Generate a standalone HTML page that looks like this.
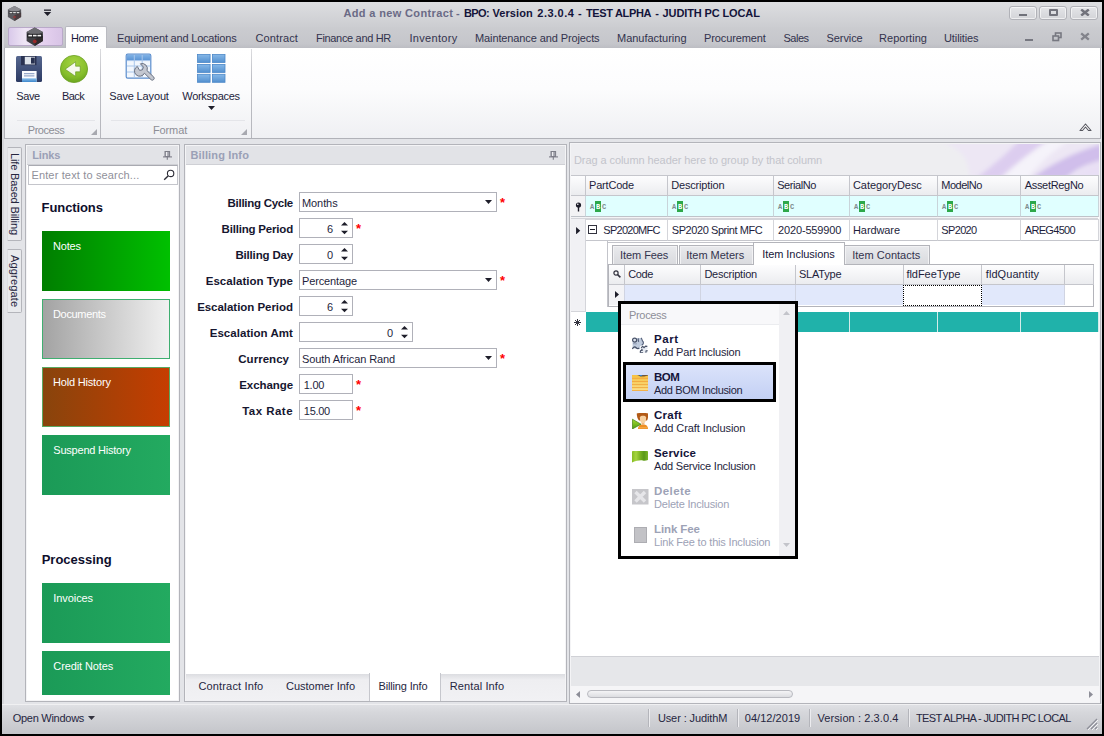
<!DOCTYPE html>
<html><head><meta charset="utf-8"><title>Add a new Contract</title>
<style>
*{box-sizing:border-box;margin:0;padding:0}
html,body{width:1104px;height:736px;overflow:hidden;background:#000}
body{font-family:"Liberation Sans",sans-serif;font-size:11px;color:#1e1e3c;position:relative}
div,span,svg{position:absolute}
.t{white-space:nowrap;line-height:14px;height:14px}
.b{font-weight:bold}
#bg{left:2px;top:2px;width:1100px;height:732px;background:#e3e4e8}
#title{left:2px;top:2px;width:1100px;height:25px;background:linear-gradient(#dddee1,#cccdd1)}
#tabs{left:2px;top:27px;width:1100px;height:21px;background:linear-gradient(#cbccd0 0%,#c5c6cb 80%,#bcbdc3 100%)}
#ribbon{left:4px;top:48px;width:1096.5px;height:91px;background:linear-gradient(#ffffff 0%,#fcfcfd 45%,#eff0f3 100%);border:1px solid #b1b2b8;border-top:none}
.mt{top:31px;color:#33334d;font-size:11px}
.wb{top:5.5px;height:14.5px;border:1px solid #b1b2b8;border-radius:3px;background:linear-gradient(#e4e5e8,#d3d4d8);box-shadow:inset 0 0 0 1px rgba(255,255,255,.6)}
.rl{top:89px;font-size:11px;color:#1e1e3c;text-align:center}
.gl{top:123px;color:#8d8e96;text-align:center}
.sep{width:1px;background:linear-gradient(rgba(190,191,197,.55),#bcbdc3 35%,#b6b7bd)}

.pnl{background:#fff;border:1px solid #b3b4ba;box-shadow:inset 0 0 0 1px #f4f4f6}
.ph{height:19px;background:#e2e3e7;border-bottom:1px solid #cfd0d5}
.pht{top:148px;color:#9aa0b6;font-weight:bold;font-size:11px}
.vt{left:7px;width:15px;border:1px solid #b4b5bb;border-left:1px solid #dcdde1;background:#e9eaed;border-radius:0 2px 2px 0}
.vtt{transform-origin:0 0;transform:rotate(90deg);font-size:11px;color:#26263f;letter-spacing:-0.1px}
.tile{left:42px;width:128px;height:60px}
.tt{left:53px;color:#fff;font-size:11px;letter-spacing:-0.15px}
.h{font-weight:bold;font-size:13px;left:42px;color:#0e0e2c;letter-spacing:-0.1px}

.lb{font-weight:bold;font-size:11.5px;color:#16162f;text-align:right;width:120px;left:173px;letter-spacing:-0.05px}
.in{background:#fff;border:1px solid #b0b1b9;height:20px;left:299px}
.iv{font-size:11px;color:#1e1e3c;letter-spacing:-0.1px}
.st{color:#f00;font-weight:bold;font-size:13px;line-height:14px;height:14px}
.bt{top:679px;font-size:11px;color:#26263f;letter-spacing:-0.12px}

.gh{top:176px;height:20px;background:linear-gradient(#fdfdfe,#ebecef);border-right:1px solid #c5c6cc;border-bottom:1px solid #c5c6cc}
.ght{top:178px;font-size:11px;color:#1e1e3c;letter-spacing:-0.15px}
.fc{top:196px;height:21px;background:#e0ffff;border-right:1px solid #c9d4da;border-bottom:1px solid #bfc3c9}
.dc{top:219px;height:22px;background:#fff;border-right:1px solid #d4d5da;border-bottom:1px solid #c5c6cc;border-top:1px solid #d4d5da}
.dt{top:223px;font-size:11px;color:#1e1e3c;letter-spacing:-0.2px}
.abc{top:201px;width:16px;height:11px;font-family:"Liberation Mono",monospace;font-size:7px;font-weight:bold;line-height:12.4px;color:#7d8a8c}
.abc b{position:absolute;left:5px;top:0;width:6px;height:11px;background:#2da84a;color:#fff;text-align:center}
.abc i{position:absolute;font-style:normal;top:0}
.itab{top:245px;height:20px;border:1px solid #b3b4ba;border-bottom:none;background:linear-gradient(#e9eaed,#d9dade);box-shadow:inset 0 0 0 1px #f2f2f4}
.itt{top:248px;font-size:11px;color:#33334d;letter-spacing:-0.15px}
.sh{top:265px;height:20px;background:linear-gradient(#fdfdfe,#ebecef);border-right:1px solid #c5c6cc;border-bottom:1px solid #c5c6cc}
.sht{top:267px;font-size:11px;color:#1e1e3c;letter-spacing:-0.15px}
.sc{top:285px;height:20px;background:#e1e8fb;border-right:1px solid #d0d4e2}
.nr{top:312px;height:20px;background:#20b2aa;border-right:1px solid #d5ecea}

.pb{left:654px;font-weight:bold;font-size:11.5px;color:#14143a;letter-spacing:0.1px}
.ps{left:654px;font-size:11px;color:#1e1e3c;letter-spacing:-0.2px}
.dis{color:#9da2b6}
.sbt{top:711px;font-size:11px;color:#26263f;letter-spacing:-0.15px}
.sbs{top:709px;width:1px;height:18px;background:#b4b5bb;box-shadow:1px 0 0 #ececef}
</style></head><body>
<div id="bg"></div>
<!-- ===== title bar ===== -->
<div id="title"></div>
<div id="tabs"></div>
<div style="left:2px;top:2px;width:2px;height:732px;background:#d6d7db"></div>
<svg style="left:6.5px;top:4.5px" width="15" height="17" viewBox="0 0 17 18"><polygon points="8.5,0.5 16,4.5 16,13 8.5,17.5 1,13 1,4.5" fill="#5a5a5f"/><polygon points="8.5,0.5 16,4.5 8.5,8.5 1,4.5" fill="#8d8d92"/><polygon points="8.5,17.5 8.5,11 16,8 16,13" fill="#4a3d40"/><rect x="2" y="6.5" width="13" height="3" fill="#3a3a3e"/><rect x="3" y="7.3" width="3" height="1.4" fill="#dcdcdc"/><rect x="7" y="7.3" width="3" height="1.4" fill="#dcdcdc"/><rect x="11" y="7.3" width="3" height="1.4" fill="#dcdcdc"/><circle cx="8.5" cy="13" r="1.5" fill="#8a3a3a"/></svg>
<svg style="left:43px;top:9px" width="9" height="8" viewBox="0 0 9 8"><rect x="1" y="0.5" width="7" height="1.3" fill="#1e1e2a"/><polygon points="0.8,3 8.2,3 4.5,7" fill="#1e1e2a"/></svg>
<div id="ttl" style="left:0;top:6.4px;width:1104px;height:14px;font-weight:bold;font-size:11px;color:#14143a"><span class="t tsg" style="left:343.4px;top:0;color:#6a6a86;letter-spacing:0.361px">Add a new Contract</span> <span class="t tsg" style="left:456px;top:0;color:#6a6a86">-</span> <span class="t tsg" style="left:464.1px;top:0;letter-spacing:-0.675px">BPO:</span> <span class="t tsg" style="left:492.4px;top:0;letter-spacing:0.093px">Version</span> <span class="t tsg" style="left:537.3px;top:0;letter-spacing:0.480px">2.3.0.4</span> <span class="t tsg" style="left:577.9px;top:0">-</span> <span class="t tsg" style="left:585.9px;top:0;letter-spacing:-0.346px">TEST ALPHA</span> <span class="t tsg" style="left:655.2px;top:0">-</span> <span class="t tsg" style="left:662.6px;top:0;letter-spacing:-0.120px">JUDITH PC LOCAL</span> </div>
<div class="wb" style="left:1009px;width:28px"></div>
<div class="wb" style="left:1039px;width:28px"></div>
<div class="wb" style="left:1070px;width:28px"></div>
<div style="left:1019px;top:14px;width:8px;height:2px;background:#70717a"></div>
<div style="left:1049px;top:9.3px;width:9.4px;height:6.6px;border:2.1px solid #72737c;border-radius:1px"></div>
<svg style="left:1079.5px;top:9px" width="10" height="7" viewBox="0 0 10 7"><path d="M1.2 0.5 L8.8 6.5 M8.8 0.5 L1.2 6.5" stroke="#72737c" stroke-width="2.5"/></svg>
<!-- ===== menu tabs ===== -->
<div style="left:8px;top:27px;width:55px;height:19px;border:1px solid #b9a9c9;border-radius:2px;background:linear-gradient(90deg,#d9c9ea,#efe6f5 30%,#e3cfee 70%,#d8c4e6)"></div>
<svg style="left:25px;top:26.5px" width="19.5" height="19.5" viewBox="0 0 17 18"><polygon points="8.5,0.5 16,4.5 16,13 8.5,17.5 1,13 1,4.5" fill="#3f3f43"/><polygon points="8.5,0.5 16,4.5 8.5,8.5 1,4.5" fill="#6c6c71"/><polygon points="8.5,17.5 8.5,11 16,8 16,13" fill="#2f2a2c"/><rect x="1.5" y="6.3" width="14" height="3.4" fill="#1d1d20"/><rect x="2.6" y="7.2" width="3.4" height="1.5" fill="#f2f2f2"/><rect x="6.8" y="7.2" width="3.4" height="1.5" fill="#f2f2f2"/><rect x="11" y="7.2" width="3.4" height="1.5" fill="#f2f2f2"/><circle cx="8.5" cy="13.2" r="1.7" fill="#9a2a2a"/></svg>
<div style="left:65px;top:26px;width:42px;height:23px;background:linear-gradient(#fdfdfe,#fff);border:1px solid #b9bac0;border-bottom:none;border-radius:2px 2px 0 0"></div>
<div class="t mt" style="left:71px;color:#16163a;letter-spacing:-0.536px">Home</div>
<div class="t mt" style="left:117px;letter-spacing:-0.202px">Equipment and Locations</div>
<div class="t mt" style="left:255.5px;letter-spacing:0.115px">Contract</div>
<div class="t mt" style="left:316px;letter-spacing:-0.321px">Finance and HR</div>
<div class="t mt" style="left:409.5px;letter-spacing:0.306px">Inventory</div>
<div class="t mt" style="left:475px;letter-spacing:-0.112px">Maintenance and Projects</div>
<div class="t mt" style="left:617px;letter-spacing:-0.017px">Manufacturing</div>
<div class="t mt" style="left:704px;letter-spacing:-0.108px">Procurement</div>
<div class="t mt" style="left:783.5px;letter-spacing:-0.506px">Sales</div>
<div class="t mt" style="left:826.5px;letter-spacing:-0.08px">Service</div>
<div class="t mt" style="left:879px;letter-spacing:0.033px">Reporting</div>
<div class="t mt" style="left:944px;letter-spacing:-0.106px">Utilities</div>
<div style="left:1025px;top:39px;width:8px;height:2px;background:#777881"></div>
<svg style="left:1052px;top:32px" width="10" height="10" viewBox="0 0 10 10"><rect x="3.5" y="1" width="5.5" height="4.5" fill="none" stroke="#777881" stroke-width="1.6"/><rect x="1" y="4" width="5.5" height="4.5" fill="#c4c5ca" stroke="#777881" stroke-width="1.6"/></svg>
<svg style="left:1080px;top:32px" width="10" height="9" viewBox="0 0 10 9"><path d="M1.2 1.4 L8.8 7.6 M8.8 1.4 L1.2 7.6" stroke="#83848c" stroke-width="2.4"/></svg>
<!-- ===== ribbon ===== -->
<div id="ribbon"></div>
<div class="sep" style="left:100px;top:49px;height:89px"></div>
<div class="sep" style="left:251px;top:49px;height:89px"></div>
<div style="left:17px;top:120px;width:78px;height:1px;background:#e4e5e9"></div>
<div style="left:111px;top:120px;width:134px;height:1px;background:#e4e5e9"></div>
<div class="t rl" style="left:8px;width:40px;letter-spacing:-0.365px">Save</div>
<div class="t rl" style="left:53px;width:40px;letter-spacing:-0.562px">Back</div>
<div class="t rl" style="left:104px;width:70px;letter-spacing:-0.148px">Save Layout</div>
<div class="t rl" style="left:176px;width:70px;letter-spacing:-0.277px">Workspaces</div>
<svg style="left:208px;top:106px" width="7" height="4" viewBox="0 0 7 4"><polygon points="0,0 7,0 3.5,4" fill="#1e1e2a"/></svg>
<div class="t gl" style="left:16px;width:60px;letter-spacing:-0.485px">Process</div>
<div class="t gl" style="left:140px;width:60px;letter-spacing:-0.099px">Format</div>
<svg style="left:91px;top:129px" width="6" height="6" viewBox="0 0 6 6"><polygon points="6,0 6,6 0,6" fill="#a8a9b0"/></svg>
<svg style="left:241px;top:129px" width="6" height="6" viewBox="0 0 6 6"><polygon points="6,0 6,6 0,6" fill="#a8a9b0"/></svg>
<svg style="left:1079px;top:122px" width="13" height="10" viewBox="0 0 13 10"><path d="M1 8.5 L6.5 2 L12 8.5 L9.5 8.5 L6.5 5 L3.5 8.5 Z" fill="#fff" stroke="#55565e" stroke-width="1.1" stroke-linejoin="round"/></svg>
<svg style="left:16px;top:56px" width="26" height="26" viewBox="0 0 26 26"><defs><linearGradient id="fl" x1="0" y1="0" x2="0" y2="1"><stop offset="0" stop-color="#56678f"/><stop offset="1" stop-color="#2c3a63"/></linearGradient><linearGradient id="fb" x1="0" y1="0" x2="0" y2="1"><stop offset="0" stop-color="#8cc0ea"/><stop offset="1" stop-color="#3d86cc"/></linearGradient></defs><rect x="0" y="0" width="26" height="26" rx="1.5" fill="url(#fl)"/><rect x="5" y="0" width="15.5" height="9.2" fill="#2a3252"/><rect x="8.8" y="0.8" width="10.2" height="7.6" fill="#dfe4ec"/><rect x="15" y="1.6" width="3.8" height="6" fill="#27304e"/><rect x="6" y="15" width="14.6" height="11" fill="#fbfcfe"/><rect x="8" y="17.2" width="10.4" height="1" fill="#7f95bd"/><rect x="8" y="19.4" width="10.4" height="1" fill="#7f95bd"/><rect x="6" y="22.3" width="14.6" height="3.7" fill="url(#fb)"/></svg>
<svg style="left:60px;top:55px" width="28" height="28" viewBox="0 0 28 28"><defs><radialGradient id="gb" cx="0.5" cy="0.3" r="0.8"><stop offset="0" stop-color="#a6d544"/><stop offset="0.6" stop-color="#86be2c"/><stop offset="1" stop-color="#5f9a1a"/></radialGradient></defs><circle cx="14" cy="14" r="13.6" fill="url(#gb)" stroke="#6c9f23" stroke-width="0.8"/><path d="M5.2 14.2 L15.6 6.8 L15.6 11.2 L20.2 11.2 L20.2 16.8 L15.6 16.8 L15.6 21.4 Z" fill="#f6f9ef" stroke="#5e8f1c" stroke-width="0.6"/></svg>
<svg style="left:125px;top:53px" width="30" height="30" viewBox="0 0 30 30"><defs><linearGradient id="th" x1="0" y1="0" x2="0" y2="1"><stop offset="0" stop-color="#7fb2e6"/><stop offset="1" stop-color="#5a93d4"/></linearGradient></defs><rect x="1.2" y="1.2" width="24.6" height="24" rx="1.5" fill="#f2f7fd" stroke="#5b8dcd" stroke-width="1.2"/><rect x="1.8" y="1.8" width="23.4" height="5.6" fill="url(#th)"/><path d="M9.3 2 V25 M17.2 2 V25 M2 13 H25 M2 19 H25 M2 7.6 H25" stroke="#a9c6ea" stroke-width="1" fill="none"/><path d="M12.5 11.2 A5.2 5.2 0 1 0 19.6 18 L26.4 24.6 A1.9 1.9 0 0 0 29 21.9 L22.2 15.4 A5.2 5.2 0 0 0 15.6 8.6 L18.6 11.8 L17.6 14.6 L14.8 15.2 Z" transform="translate(-0.2,2.2)" fill="#c3c7d0" stroke="#6a7181" stroke-width="1" stroke-linejoin="round"/></svg>
<svg style="left:197px;top:54px" width="29" height="29" viewBox="0 0 29 29"><defs><linearGradient id="wg" x1="0" y1="0" x2="0" y2="1"><stop offset="0" stop-color="#86b8e8"/><stop offset="1" stop-color="#5390cf"/></linearGradient></defs><g fill="url(#wg)" stroke="#4c88c8" stroke-width="0.8"><rect x="0.5" y="0.5" width="12.6" height="8"/><rect x="15.4" y="0.5" width="12.6" height="8"/><rect x="0.5" y="10.4" width="12.6" height="8"/><rect x="15.4" y="10.4" width="12.6" height="8"/><rect x="0.5" y="20.3" width="12.6" height="8"/><rect x="15.4" y="20.3" width="12.6" height="8"/></g></svg>
<!-- ICONS-RIBBON -->
<div class="vt" style="top:147px;height:94px"></div>
<div class="vt" style="top:249px;height:64px"></div>
<div class="t vtt" style="left:21.5px;top:153px;letter-spacing:-0.14px">Life Based Billing</div>
<div class="t vtt" style="left:21.5px;top:255px;letter-spacing:0.18px">Aggregate</div>
<div class="pnl" style="left:25px;top:144px;width:155px;height:558px"></div>
<div class="ph" style="left:27px;top:146px;width:151px"></div>
<div class="t pht" style="left:32.2px;letter-spacing:-0.163px">Links</div>
<svg style="left:163px;top:150.7px" width="9" height="9" viewBox="0 0 9 9"><rect x="2" y="0.5" width="4.6" height="5" fill="#a0a1aa" stroke="#7d7e88" stroke-width="1"/><rect x="3" y="1" width="1.2" height="4" fill="#ededf0"/><path d="M0 5.9 H9" stroke="#7d7e88" stroke-width="1.1"/><path d="M4.3 6 V8.8" stroke="#7d7e88" stroke-width="1.1"/></svg>
<div style="left:28px;top:165px;width:150px;height:20px;background:#fff;border:1px solid #c4c5cb;border-top-color:#a9aab1"></div>
<div class="t" style="left:31.4px;top:168px;color:#8f909a;font-size:11px;letter-spacing:0.153px">Enter text to search...</div>
<svg style="left:163px;top:169px" width="12" height="12" viewBox="0 0 12 12"><circle cx="7.6" cy="4.4" r="3.2" fill="none" stroke="#2c2c36" stroke-width="1.1"/><path d="M5.3 6.8 L1.2 10.8" stroke="#2c2c36" stroke-width="1.4"/></svg>
<div class="t h" style="left:41.6px;top:201px;letter-spacing:-0.095px">Functions</div>
<div class="tile" style="top:231px;background:linear-gradient(90deg,#007e00,#00c000)"></div>
<div class="t tt" style="left:53px;top:239px;letter-spacing:-0.167px">Notes</div>
<div class="tile" style="top:299px;background:linear-gradient(90deg,#a3a3a3,#f1f1f1);border:1px solid #3fae70"></div>
<div class="t tt" style="left:53px;top:307px;letter-spacing:-0.334px">Documents</div>
<div class="tile" style="top:367px;background:linear-gradient(90deg,#88440c,#c63d00);border:1px solid #5aa860"></div>
<div class="t tt" style="left:53px;top:375px;letter-spacing:-0.183px">Hold History</div>
<div class="tile" style="top:435px;background:linear-gradient(90deg,#1b9a57,#23aa60)"></div>
<div class="t tt" style="left:53.3px;top:443px;letter-spacing:-0.222px">Suspend History</div>
<div class="t h" style="left:41.7px;top:553px;letter-spacing:-0.010px">Processing</div>
<div class="tile" style="top:583px;background:linear-gradient(90deg,#1b9a57,#23aa60)"></div>
<div class="t tt" style="left:53.3px;top:591px;letter-spacing:-0.075px">Invoices</div>
<div class="tile" style="top:651px;height:44px;background:linear-gradient(90deg,#1b9a57,#23aa60)"></div>
<div class="t tt" style="left:53.3px;top:659px;letter-spacing:-0.099px">Credit Notes</div>
<!-- LEFT -->
<div class="pnl" style="left:184px;top:144px;width:383px;height:558px"></div>
<div class="ph" style="left:186px;top:146px;width:379px"></div>
<div class="t pht" style="left:190.4px;letter-spacing:0.154px">Billing Info</div>
<svg style="left:549.3px;top:150.7px" width="9" height="9" viewBox="0 0 9 9"><rect x="2" y="0.5" width="4.6" height="5" fill="#a0a1aa" stroke="#7d7e88" stroke-width="1"/><rect x="3" y="1" width="1.2" height="4" fill="#ededf0"/><path d="M0 5.9 H9" stroke="#7d7e88" stroke-width="1.1"/><path d="M4.3 6 V8.8" stroke="#7d7e88" stroke-width="1.1"/></svg>
<div class="t lb" style="top:195.7px;left:173px;letter-spacing:-0.275px">Billing Cycle</div>
<div class="in" style="top:192px;width:198px"></div><div class="t iv" style="left:302px;top:195.5px;letter-spacing:-0.087px">Months</div><svg style="left:485px;top:200px" width="7" height="4" viewBox="0 0 7 4"><polygon points="0,0 7,0 3.5,4" fill="#1e1e2a"/></svg><div class="t st" style="left:500px;top:196px">*</div>
<div class="t lb" style="top:221.7px;left:173px;letter-spacing:-0.194px">Billing Period</div>
<div class="in" style="top:218px;width:54px"></div><div class="t iv" style="left:313px;width:20px;text-align:right;top:221.5px">6</div><svg style="left:341px;top:222px" width="7" height="13" viewBox="0 0 7 13"><polygon points="0,3.5 7,3.5 3.5,0" fill="#1e1e2a"/><polygon points="0,8.7 7,8.7 3.5,12.2" fill="#1e1e2a"/></svg>
<div class="t st" style="left:356px;top:222px">*</div>
<div class="t lb" style="top:247.7px;left:173px;letter-spacing:-0.165px">Billing Day</div>
<div class="in" style="top:244px;width:54px"></div><div class="t iv" style="left:313px;width:20px;text-align:right;top:247.5px">0</div><svg style="left:341px;top:248px" width="7" height="13" viewBox="0 0 7 13"><polygon points="0,3.5 7,3.5 3.5,0" fill="#1e1e2a"/><polygon points="0,8.7 7,8.7 3.5,12.2" fill="#1e1e2a"/></svg>
<div class="t lb" style="top:273.7px;left:173px;letter-spacing:0.040px">Escalation Type</div>
<div class="in" style="top:270px;width:198px"></div><div class="t iv" style="left:302px;top:273.5px;letter-spacing:-0.133px">Percentage</div><svg style="left:485px;top:278px" width="7" height="4" viewBox="0 0 7 4"><polygon points="0,0 7,0 3.5,4" fill="#1e1e2a"/></svg><div class="t st" style="left:500px;top:274px">*</div>
<div class="t lb" style="top:299.7px;left:173px;letter-spacing:-0.037px">Escalation Period</div>
<div class="in" style="top:296px;width:54px"></div><div class="t iv" style="left:313px;width:20px;text-align:right;top:299.5px">6</div><svg style="left:341px;top:300px" width="7" height="13" viewBox="0 0 7 13"><polygon points="0,3.5 7,3.5 3.5,0" fill="#1e1e2a"/><polygon points="0,8.7 7,8.7 3.5,12.2" fill="#1e1e2a"/></svg>
<div class="t lb" style="top:325.7px;left:173px;letter-spacing:0.048px">Escalation Amt</div>
<div class="in" style="top:322px;width:114px"></div><div class="t iv" style="left:373px;width:20px;text-align:right;top:325.5px">0</div><svg style="left:401px;top:326px" width="7" height="13" viewBox="0 0 7 13"><polygon points="0,3.5 7,3.5 3.5,0" fill="#1e1e2a"/><polygon points="0,8.7 7,8.7 3.5,12.2" fill="#1e1e2a"/></svg>
<div class="t lb" style="top:351.7px;left:169px;letter-spacing:0.027px">Currency</div>
<div class="in" style="top:348px;width:198px"></div><div class="t iv" style="left:302px;top:351.5px;letter-spacing:-0.091px">South African Rand</div><svg style="left:485px;top:356px" width="7" height="4" viewBox="0 0 7 4"><polygon points="0,0 7,0 3.5,4" fill="#1e1e2a"/></svg><div class="t st" style="left:500px;top:352px">*</div>
<div class="t lb" style="top:377.7px;left:173px;letter-spacing:-0.070px">Exchange</div>
<div class="in" style="top:374px;width:54px"></div><div class="t iv" style="left:303.8px;top:377.5px;letter-spacing:-0.292px">1.00</div><div class="t st" style="left:356px;top:378px">*</div>
<div class="t lb" style="top:403.7px;left:173px;letter-spacing:0.468px">Tax Rate</div>
<div class="in" style="top:400px;width:54px"></div><div class="t iv" style="left:303.8px;top:403.5px;letter-spacing:-0.274px">15.00</div><div class="t st" style="left:356px;top:404px">*</div>
<div style="left:186px;top:674px;width:379px;height:27px;background:linear-gradient(#dcdde1 0%,#eeeef1 22%,#f1f1f4 100%)"></div>
<div style="left:369px;top:673px;width:72px;height:28px;background:#fff;border:1px solid #c6c7cd;border-top:none;border-bottom:none"></div>
<div class="t bt" style="left:198.5px;letter-spacing:0.145px">Contract Info</div>
<div class="t bt" style="left:286px;letter-spacing:-0.007px">Customer Info</div>
<div class="t bt" style="left:378.5px;letter-spacing:-0.154px">Billing Info</div>
<div class="t bt" style="left:449.8px;letter-spacing:0.104px">Rental Info</div>
<!-- MID -->
<div class="pnl" style="left:569px;top:142px;width:531.5px;height:562px"></div>
<div style="left:571px;top:655.6px;width:527.5px;height:30.4px;background:#e6e7ea;border-top:1px solid #d0d1d6"></div>
<div style="left:571px;top:144px;width:527.5px;height:32px;background:#eeeef1;border-bottom:1px solid #c5c6cc;overflow:hidden">
<svg style="left:327px;top:0" width="201" height="31" viewBox="0 0 201 31"><defs><filter id="bl" x="-10%" y="-30%" width="120%" height="160%"><feGaussianBlur stdDeviation="2.2"/></filter></defs><g filter="url(#bl)"><path d="M40 -3 C70 6 70 20 72 34 L204 34 L204 -3 Z" fill="#ece4f5" opacity=".75"/><path d="M78 34 C95 22 110 8 122 -4 L150 -4 C132 8 115 22 102 34 Z" fill="#d8c7ee" opacity=".8"/><path d="M104 34 C118 20 136 6 152 -4 L172 -4 C156 6 140 20 130 34 Z" fill="#f6f3fa" opacity=".95"/><path d="M134 34 C150 22 176 8 204 0 L204 16 C188 20 176 26 168 34 Z" fill="#cdb9ea" opacity=".9"/><path d="M172 34 C182 26 194 20 204 17 L204 34 Z" fill="#e9dff5" opacity=".9"/></g></svg></div>
<div class="t" style="left:574px;top:153px;font-size:11px;color:#c3c4cb;letter-spacing:-0.077px">Drag a column header here to group by that column</div>
<div class="gh" style="left:571px;width:15px"></div>
<div class="fc" style="left:571px;width:15px;background:#f3f3f5"></div>
<svg style="left:575px;top:202px" width="7" height="10" viewBox="0 0 7 10"><circle cx="3.5" cy="3" r="2.6" fill="#1e1e2a"/><circle cx="2.8" cy="2.3" r="0.8" fill="#fff"/><rect x="2.8" y="5" width="1.4" height="4.5" fill="#1e1e2a"/></svg>
<div style="left:571px;top:217px;width:15px;height:95px;background:#f1f1f4;border-right:1px solid #d4d5da"></div>
<div style="left:571px;top:217px;width:527px;height:2px;background:#f4f4f6;border-bottom:1px solid #d4d5da"></div>
<svg style="left:576.3px;top:227px" width="4.3" height="7.4" viewBox="0 0 4 7"><polygon points="0,0 4,3.5 0,7" fill="#1e1e2a"/></svg>
<div class="gh" style="left:586px;width:82px"></div><div class="t ght" style="left:589px;letter-spacing:-0.198px">PartCode</div>
<div class="fc" style="left:586px;width:82px"></div><div class="abc" style="left:590px"><i style="left:0">A</i><b>B</b><i style="left:12px">C</i></div>
<div class="dc" style="left:586px;width:82px"></div><div class="t dt" style="left:603.3px;letter-spacing:-0.728px">SP2020MFC</div>
<div class="gh" style="left:668px;width:106px"></div><div class="t ght" style="left:671.2px;letter-spacing:-0.165px">Description</div>
<div class="fc" style="left:668px;width:106px"></div><div class="abc" style="left:672px"><i style="left:0">A</i><b>B</b><i style="left:12px">C</i></div>
<div class="dc" style="left:668px;width:106px"></div><div class="t dt" style="left:671.8px;letter-spacing:-0.432px">SP2020 Sprint MFC</div>
<div class="gh" style="left:774px;width:76px"></div><div class="t ght" style="left:777.2px;letter-spacing:-0.438px">SerialNo</div>
<div class="fc" style="left:774px;width:76px"></div><div class="abc" style="left:778px"><i style="left:0">A</i><b>B</b><i style="left:12px">C</i></div>
<div class="dc" style="left:774px;width:76px"></div><div class="t dt" style="left:778px;letter-spacing:-0.147px">2020-559900</div>
<div class="gh" style="left:850px;width:88px"></div><div class="t ght" style="left:853px;letter-spacing:-0.079px">CategoryDesc</div>
<div class="fc" style="left:850px;width:88px"></div><div class="abc" style="left:854px"><i style="left:0">A</i><b>B</b><i style="left:12px">C</i></div>
<div class="dc" style="left:850px;width:88px"></div><div class="t dt" style="left:853px;letter-spacing:-0.092px">Hardware</div>
<div class="gh" style="left:938px;width:83px"></div><div class="t ght" style="left:941.3px;letter-spacing:-0.497px">ModelNo</div>
<div class="fc" style="left:938px;width:83px"></div><div class="abc" style="left:942px"><i style="left:0">A</i><b>B</b><i style="left:12px">C</i></div>
<div class="dc" style="left:938px;width:83px"></div><div class="t dt" style="left:941.3px;letter-spacing:-0.647px">SP2020</div>
<div class="gh" style="left:1021px;width:78px"></div><div class="t ght" style="left:1024.7px;letter-spacing:-0.312px">AssetRegNo</div>
<div class="fc" style="left:1021px;width:78px"></div><div class="abc" style="left:1025px"><i style="left:0">A</i><b>B</b><i style="left:12px">C</i></div>
<div class="dc" style="left:1021px;width:78px"></div><div class="t dt" style="left:1024.8px;letter-spacing:-0.688px">AREG4500</div>
<div style="left:588px;top:225px;width:9px;height:9px;border:1px solid #33333f;background:#fff"></div><div style="left:590px;top:229px;width:5px;height:1px;background:#1e1e2a"></div>
<div style="left:607px;top:241px;width:488px;height:66px;border-left:1px solid #c3c4ca;background:#fff"></div><div style="left:607px;top:241.5px;width:147px;height:1px;background:#c3c4ca"></div><div style="left:571px;top:311px;width:15px;height:1px;background:#d4d5da"></div>
<div class="itab" style="left:612px;width:66px"></div><div class="t itt" style="left:620.1px;letter-spacing:-0.083px">Item Fees</div>
<div class="itab" style="left:679px;width:75px"></div><div class="t itt" style="left:686.2px;letter-spacing:-0.007px">Item Meters</div>
<div class="itab" style="left:844px;width:86px"></div><div class="t itt" style="left:852.2px;letter-spacing:0.027px">Item Contacts</div>
<div style="left:608px;top:264px;width:486px;height:43px;border:1px solid #b3b4ba;background:#fff"></div>
<div style="left:753px;top:242px;width:92px;height:23px;border:1px solid #b3b4ba;border-bottom:none;background:#fff"></div><div class="t itt" style="left:762.2px;top:247px;color:#16163a;letter-spacing:-0.053px">Item Inclusions</div>
<div class="sh" style="left:609px;width:16px"></div><div class="sc" style="left:609px;width:16px;background:#f3f3f6"></div>
<div class="sh" style="left:625px;width:76px"></div><div class="t sht" style="left:628.3px;letter-spacing:-0.428px">Code</div><div class="sc" style="left:625px;width:76px"></div>
<div class="sh" style="left:701px;width:95px"></div><div class="t sht" style="left:704.4px;letter-spacing:-0.222px">Description</div><div class="sc" style="left:701px;width:95px"></div>
<div class="sh" style="left:796px;width:108px"></div><div class="t sht" style="left:798.9px;letter-spacing:-0.189px">SLAType</div><div class="sc" style="left:796px;width:108px"></div>
<div class="sh" style="left:904px;width:78px"></div><div class="t sht" style="left:906.5px;letter-spacing:-0.065px">fldFeeType</div><div class="sc" style="left:904px;width:78px"></div>
<div class="sh" style="left:982px;width:83px"></div><div class="t sht" style="left:985.8px;letter-spacing:0.067px">fldQuantity</div><div class="sc" style="left:982px;width:83px"></div>
<div class="sh" style="left:1065px;width:29px"></div>
<svg style="left:613px;top:270px" width="8" height="8" viewBox="0 0 8 8"><circle cx="3" cy="3" r="2.1" fill="none" stroke="#33333f" stroke-width="1.2"/><path d="M4.6 4.6 L7.4 7.4" stroke="#33333f" stroke-width="1.5"/></svg>
<svg style="left:615px;top:291px" width="4" height="7" viewBox="0 0 4 7"><polygon points="0,0 4,3.5 0,7" fill="#1e1e2a"/></svg>
<div style="left:903px;top:285px;width:79px;height:21px;background:#fff;border:1px dotted #000"></div>
<svg style="left:574px;top:319px" width="7" height="7" viewBox="0 0 7 7"><path d="M3.5 0 V7 M0 3.5 H7 M1 1 L6 6 M6 1 L1 6" stroke="#33333f" stroke-width="1"/></svg>
<div class="nr" style="left:586px;width:82px"></div><div class="nr" style="left:668px;width:106px"></div><div class="nr" style="left:774px;width:76px"></div><div class="nr" style="left:850px;width:88px"></div><div class="nr" style="left:938px;width:83px"></div><div class="nr" style="left:1021px;width:78px"></div>
<div style="left:571px;top:686px;width:527.5px;height:16px;background:#f5f5f7"></div>
<div style="left:587px;top:690.3px;width:205.5px;height:8px;border:1px solid #b9bac0;border-radius:4px;background:linear-gradient(#f4f4f6,#dcdde1)"></div>
<svg style="left:576px;top:691px" width="4" height="7" viewBox="0 0 4 7"><polygon points="4,0 0,3.5 4,7" fill="#8d8e98"/></svg>
<svg style="left:1089px;top:691px" width="4" height="7" viewBox="0 0 4 7"><polygon points="0,0 4,3.5 0,7" fill="#8d8e98"/></svg>
<!-- GRID -->
<div style="left:618px;top:301px;width:180px;height:258px;background:#fff;border:3px solid #000"></div>
<div style="left:621px;top:304px;width:158px;height:21px;background:#f8f8fa;border-bottom:1px solid #ebecef"></div>
<div style="left:779px;top:304px;width:16px;height:252px;background:#f0f0f3"></div>
<svg style="left:783px;top:311px" width="7" height="4" viewBox="0 0 7 4"><polygon points="0,4 7,4 3.5,0" fill="#c3c4ca"/></svg>
<svg style="left:783px;top:543px" width="7" height="4" viewBox="0 0 7 4"><polygon points="0,0 7,0 3.5,4" fill="#c3c4ca"/></svg>
<div class="t" style="left:629px;top:308px;font-size:11px;color:#8d8e98;letter-spacing:-0.33px">Process</div>
<div style="left:623px;top:362px;width:153px;height:40px;background:linear-gradient(#dbe3fa,#c3d0f4);border:3px solid #000"></div>
<div class="t pb" style="left:654px;top:332px;letter-spacing:0.607px">Part</div><div class="t ps" style="left:654px;top:345px;letter-spacing:-0.153px">Add Part Inclusion</div>
<div class="t pb" style="left:654px;top:370px;letter-spacing:-0.458px">BOM</div><div class="t ps" style="left:654px;top:383px;letter-spacing:-0.349px">Add BOM Inclusion</div>
<div class="t pb" style="left:654px;top:408px;letter-spacing:0.235px">Craft</div><div class="t ps" style="left:654px;top:421px;letter-spacing:-0.083px">Add Craft Inclusion</div>
<div class="t pb" style="left:654px;top:446px;letter-spacing:0.179px">Service</div><div class="t ps" style="left:654px;top:459px;letter-spacing:-0.209px">Add Service Inclusion</div>
<div class="t pb dis" style="left:654px;top:484px;letter-spacing:0.431px">Delete</div><div class="t ps dis" style="left:654px;top:497px;letter-spacing:-0.192px">Delete Inclusion</div>
<div class="t pb dis" style="left:654px;top:522px;letter-spacing:-0.114px">Link Fee</div><div class="t ps dis" style="left:654px;top:535px;letter-spacing:-0.183px">Link Fee to this Inclusion</div>
<svg style="left:632px;top:336.5px" width="16.5" height="16.5" viewBox="0 0 17 17"><path d="M0.6 3 L4.6 1.4 L9 1 L11.6 4.4 L11.8 8 L8.4 9.6 L7.8 12.6 L4 12.2 L0.6 11.4 Z" fill="#bfcbdd"/><path d="M8.4 11.6 L11 9.2 L13 10.4 L15.8 9.2 L16.2 12 L14.6 13.4 L16.2 14.4 L16 16.2 L8.4 16.2 L9.6 13.8 Z" fill="#e9edf4"/><circle cx="2.7" cy="3.2" r="2.1" fill="#dde3ee" stroke="#485268" stroke-width="1.25"/><path d="M6.2 1.4 C7 2.6 6 4 7 5 M9.4 1 C10.6 2.4 10.2 3.6 11.4 4.8 C12.2 6.2 11.6 7.6 10 8.2" fill="none" stroke="#55607a" stroke-width="1.2"/><path d="M0.4 12.2 C1.4 10.4 2.8 9.6 4 10.8 C5 11.8 6.2 12.4 7.4 11.4" fill="none" stroke="#485268" stroke-width="1.3"/><path d="M1 7 C2.4 6.4 3.6 7.6 5 7" fill="none" stroke="#8c98ae" stroke-width="1"/><path d="M9.4 11.2 L11 9.6 L12.4 11 L14 9.4 L15.8 9.6 M8.4 16 L8.8 14.2 L10.6 13.6 L9.8 12.2 M14.2 16.2 L14.6 14.2 L16.2 14.2 M8.4 16.2 H11.4" fill="none" stroke="#485268" stroke-width="1.2"/></svg>
<svg style="left:632px;top:375px" width="16" height="16" viewBox="0 0 16 16"><defs><linearGradient id="bm" x1="0" y1="0" x2="0" y2="1"><stop offset="0" stop-color="#f6c040"/><stop offset="1" stop-color="#fbe18c"/></linearGradient><linearGradient id="bd" x1="0" y1="0" x2="0" y2="1"><stop offset="0" stop-color="#3a3440"/><stop offset="1" stop-color="#c07818" stop-opacity="0.2"/></linearGradient></defs><rect x="0" y="0" width="16" height="16" fill="url(#bm)"/><path d="M0 3.4 H16 M0 6.5 H16 M0 9.6 H16 M0 12.6 H16 M0 15.6 H16" stroke="#f0a63c" stroke-width="0.9"/><path d="M5 0 C7.5 0.4 8 2.4 9.6 2.6 C12 2.8 13 0.8 16 0.4 L16 0 Z" fill="url(#bd)"/><path d="M7 0 L10.6 0 L9 1.6 Z" fill="#2f86d8"/></svg>
<svg style="left:632px;top:413px" width="16" height="16" viewBox="0 0 16 16"><defs><linearGradient id="cg" x1="0" y1="0" x2="0" y2="1"><stop offset="0" stop-color="#a4dc30"/><stop offset="1" stop-color="#4f9c12"/></linearGradient></defs><path d="M6 16 C6 12.6 8 11.4 11 11.4 C14 11.4 16 12.6 16 16 Z" fill="#ee8e22"/><path d="M6.4 14.8 H16" stroke="#f6b050" stroke-width="1"/><path d="M4.8 0.4 C6 -0.2 15 -0.2 16 0.4 C16.4 3 16 6 15 7.6 L7 7.6 C5.6 6 4.6 3 4.8 0.4 Z" fill="#b25a16"/><path d="M8 4.2 C8.6 2.4 13.4 2.4 14 4.2 C14.4 6.6 13.4 10.4 11 10.6 C8.6 10.4 7.6 6.6 8 4.2 Z" fill="#f6d0a0"/><path d="M9.6 10 H12.4 V12 H9.6 Z" fill="#eeb880"/><path d="M0.4 6.2 L9 11.2 L0.4 16 Z" fill="url(#cg)" stroke="#3d7a10" stroke-width="0.7" stroke-linejoin="round"/></svg>
<svg style="left:632px;top:451px" width="16" height="13" viewBox="0 0 16 13"><defs><linearGradient id="fg" x1="0" y1="0" x2="1" y2="0"><stop offset="0" stop-color="#86bc24"/><stop offset="0.25" stop-color="#a6d440"/><stop offset="0.55" stop-color="#74ae1e"/><stop offset="0.75" stop-color="#5a9818"/><stop offset="1" stop-color="#7cb628"/></linearGradient></defs><path d="M0 0.2 C4 -0.2 12 -0.2 16 0.2 V9 C14.4 9.6 12.4 10.2 10.8 9.6 C9.2 8.8 7.2 9.4 5 9.8 C3 10.2 1.4 10.8 0 11.6 Z" fill="url(#fg)"/></svg>
<svg style="left:632px;top:489px" width="17" height="16" viewBox="0 0 17 16"><rect x="0" y="0" width="16.5" height="15.5" fill="#c6c6ca"/><path d="M3.5 3 L13 12.5 M13 3 L3.5 12.5" stroke="#e6e6e9" stroke-width="3.4"/></svg>
<svg style="left:634px;top:527px" width="13" height="16" viewBox="0 0 13 16"><rect x="0.5" y="0.5" width="12" height="15" fill="#c2c2c6" stroke="#adadb2" stroke-width="1"/></svg>

<!-- POPUP -->
<div style="left:2px;top:704px;width:1100px;height:30px;background:linear-gradient(#dfe0e4 0%,#d6d7db 25%,#c4c5ca 100%);border-top:1px solid #f0f0f2"></div>
<div class="t sbt" style="left:12.7px;letter-spacing:-0.269px">Open Windows</div>
<svg style="left:88px;top:716px" width="7" height="4" viewBox="0 0 7 4"><polygon points="0,0 7,0 3.5,4" fill="#33333f"/></svg>
<div class="sbs" style="left:648px"></div>
<div class="t sbt" style="left:657.9px;letter-spacing:-0.105px">User : JudithM</div>
<div class="sbs" style="left:736.5px"></div>
<div class="t sbt" style="left:744.8px;letter-spacing:0.036px">04/12/2019</div>
<div class="sbs" style="left:809px"></div>
<div class="t sbt" style="left:817.5px;letter-spacing:0.091px">Version : 2.3.0.4</div>
<div class="sbs" style="left:908px"></div>
<div class="t sbt" style="left:916px;letter-spacing:-0.625px">TEST ALPHA - JUDITH PC LOCAL</div>
<svg style="left:1086px;top:718px" width="12" height="12" viewBox="0 0 12 12"><path d="M11 1 L1 11 M11 5 L5 11 M11 9 L9 11" stroke="#8d8e98" stroke-width="1.2"/><path d="M12 2 L2 12 M12 6 L6 12 M12 10 L10 12" stroke="#f4f4f6" stroke-width="1"/></svg>
<!-- STATUS -->
</body></html>
